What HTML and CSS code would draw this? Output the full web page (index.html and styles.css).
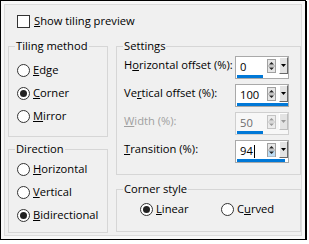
FILE: index.html
```html
<!DOCTYPE html>
<html lang="en">
<head>
    <meta charset="UTF-8">
    <title>Tiling</title>
    <link rel="stylesheet" href="styles.css">
</head>
<body>
    <div class="dialog">
        <div class="panel">
            <div class="check-row">
                <span class="checkbox"></span>
                <span><u>S</u>how tiling preview</span>
            </div>

            <div class="columns">
                <div class="col-left">
                    <fieldset class="group tiling">
                        <legend>Tiling method</legend>
                        <div class="radio-list">
                            <div class="radio-item"><span class="radio"></span><span><u>E</u>dge</span></div>
                            <div class="radio-item"><span class="radio checked"></span><span><u>C</u>orner</span></div>
                            <div class="radio-item"><span class="radio"></span><span><u>M</u>irror</span></div>
                        </div>
                    </fieldset>

                    <fieldset class="group direction">
                        <legend>Direction</legend>
                        <div class="radio-list">
                            <div class="radio-item"><span class="radio"></span><span><u>H</u>orizontal</span></div>
                            <div class="radio-item"><span class="radio"></span><span><u>V</u>ertical</span></div>
                            <div class="radio-item"><span class="radio checked"></span><span><u>B</u>idirectional</span></div>
                        </div>
                    </fieldset>
                </div>

                <div class="col-right">
                    <fieldset class="group settings">
                        <legend>Settings</legend>

                        <div class="field-row">
                            <span class="field-label">H<u>o</u>rizontal offset (%):</span>
                            <div class="spin">
                                <div class="spin-main">
                                    <span class="spin-value">0</span>
                                    <span class="spin-arrows">
                                        <svg width="9" height="14" viewBox="0 0 9 14"><rect x="0.5" y="0.5" width="8" height="13" fill="#e6e6e6" stroke="#a0a0a0"/><line x1="1" y1="7" x2="8" y2="7" stroke="#a0a0a0"/><path d="M2 5.5 L4.5 3 L7 5.5 Z" fill="#222"/><path d="M2 8.5 L7 8.5 L4.5 11 Z" fill="#222"/></svg>
                                    </span>
                                    <span class="spin-drop"><svg width="5" height="3" viewBox="0 0 5 3"><path d="M0 0 L5 0 L2.5 3 Z" fill="#000"/></svg></span>
                                </div>
                                <div class="spin-track"><div class="spin-bar" style="width: 50%"></div></div>
                            </div>
                        </div>

                        <div class="field-row">
                            <span class="field-label">Ve<u>r</u>tical offset (%):</span>
                            <div class="spin">
                                <div class="spin-main">
                                    <span class="spin-value">100</span>
                                    <span class="spin-arrows">
                                        <svg width="9" height="14" viewBox="0 0 9 14"><rect x="0.5" y="0.5" width="8" height="13" fill="#e6e6e6" stroke="#a0a0a0"/><line x1="1" y1="7" x2="8" y2="7" stroke="#a0a0a0"/><path d="M2 5.5 L4.5 3 L7 5.5 Z" fill="#222"/><path d="M2 8.5 L7 8.5 L4.5 11 Z" fill="#222"/></svg>
                                    </span>
                                    <span class="spin-drop"><svg width="5" height="3" viewBox="0 0 5 3"><path d="M0 0 L5 0 L2.5 3 Z" fill="#000"/></svg></span>
                                </div>
                                <div class="spin-track"><div class="spin-bar" style="width: 100%"></div></div>
                            </div>
                        </div>

                        <div class="field-row disabled">
                            <span class="field-label"><u>W</u>idth (%):</span>
                            <div class="spin">
                                <div class="spin-main">
                                    <span class="spin-value">50</span>
                                    <span class="spin-arrows">
                                        <svg width="9" height="14" viewBox="0 0 9 14"><rect x="0.5" y="0.5" width="8" height="13" fill="#ececec" stroke="#c4c4c4"/><line x1="1" y1="7" x2="8" y2="7" stroke="#c4c4c4"/><path d="M2 5.5 L4.5 3 L7 5.5 Z" fill="#999"/><path d="M2 8.5 L7 8.5 L4.5 11 Z" fill="#999"/></svg>
                                    </span>
                                    <span class="spin-drop"><svg width="5" height="3" viewBox="0 0 5 3"><path d="M0 0 L5 0 L2.5 3 Z" fill="#999"/></svg></span>
                                </div>
                                <div class="spin-track"><div class="spin-bar" style="width: 50%"></div></div>
                            </div>
                        </div>

                        <div class="field-row">
                            <span class="field-label"><u>T</u>ransition (%):</span>
                            <div class="spin focused">
                                <div class="spin-main">
                                    <span class="spin-value">94<span class="caret"></span></span>
                                    <span class="spin-arrows">
                                        <svg width="9" height="14" viewBox="0 0 9 14"><rect x="0.5" y="0.5" width="8" height="13" fill="#e6e6e6" stroke="#a0a0a0"/><rect x="1" y="7.5" width="7" height="6" fill="#bcdcf4"/><line x1="1" y1="7" x2="8" y2="7" stroke="#a0a0a0"/><path d="M2 5.5 L4.5 3 L7 5.5 Z" fill="#222"/><path d="M2 8.5 L7 8.5 L4.5 11 Z" fill="#222"/></svg>
                                    </span>
                                    <span class="spin-drop"><svg width="5" height="3" viewBox="0 0 5 3"><path d="M0 0 L5 0 L2.5 3 Z" fill="#000"/></svg></span>
                                </div>
                                <div class="spin-track"><div class="spin-bar" style="width: 94%"></div></div>
                            </div>
                        </div>
                    </fieldset>

                    <fieldset class="group corner">
                        <legend>Corner style</legend>
                        <div class="radio-inline">
                            <div class="radio-item linear"><span class="radio checked"></span><span><u>L</u>inear</span></div>
                            <div class="radio-item"><span class="radio"></span><span>C<u>u</u>rved</span></div>
                        </div>
                    </fieldset>
                </div>
            </div>
        </div>
    </div>
</body>
</html>
```

FILE: styles.css
```css
* {
    margin: 0;
    padding: 0;
    box-sizing: border-box;
}

body {
    font-family: 'Open Sans', 'Noto Sans', sans-serif;
    font-size: 11.2px;
    line-height: 16px;
    color: #000;
    background-color: #fff;
}

u {
    text-decoration: underline;
    text-underline-offset: 1px;
}

.dialog {
    width: 306px;
    height: 240px;
    border: 1px solid #000;
    box-shadow: 1px 1px 0 #000;
    background-color: #f8f8f8;
    padding: 3px;
}

.panel {
    height: 100%;
    border: 1px solid #dcdcdc;
    background-color: #f0f0f0;
}

.check-row {
    display: flex;
    align-items: center;
    gap: 4px;
    height: 16px;
    margin-top: 8px;
    padding-left: 12px;
}

.checkbox {
    width: 13px;
    height: 13px;
    border: 1px solid #333;
    background-color: #fff;
}

.columns {
    display: flex;
    gap: 8px;
    margin-top: 9px;
    padding-left: 3px;
}

.col-left {
    width: 100px;
    display: flex;
    flex-direction: column;
    gap: 4px;
}

.col-right {
    width: 185px;
    display: flex;
    flex-direction: column;
    gap: 6px;
}

.group {
    border: 1px solid #d6d6d6;
    padding: 0 0 0 6px;
    margin: 0;
    min-width: 0;
}

.group legend {
    padding: 0 1px;
}

.tiling {
    height: 99px;
}

.direction {
    height: 92px;
}

.settings {
    height: 137px;
}

.corner {
    height: 51px;
}

.radio-list {
    display: flex;
    flex-direction: column;
    gap: 7px;
    padding-left: 2px;
}

.tiling .radio-list {
    margin-top: 8px;
}

.direction .radio-list {
    margin-top: 4px;
}

.radio-item {
    display: flex;
    align-items: center;
    gap: 3px;
    height: 16px;
    white-space: nowrap;
}

.radio {
    width: 13px;
    height: 13px;
    border: 1px solid #333;
    border-radius: 50%;
    background-color: #fff;
    display: flex;
    align-items: center;
    justify-content: center;
}

.radio.checked::after {
    content: '';
    width: 7px;
    height: 7px;
    border-radius: 50%;
    background-color: #222;
}

.radio-inline {
    display: flex;
    margin-top: 4px;
    padding-left: 17px;
}

.radio-item.linear {
    width: 81px;
}

.field-row {
    display: flex;
    justify-content: space-between;
    align-items: flex-start;
    height: 23px;
    margin-top: 5px;
    padding-left: 1px;
    padding-right: 11px;
}

.settings legend + .field-row {
    margin-top: 2px;
}

.field-label {
    padding-top: 1px;
    white-space: nowrap;
}

.disabled .field-label {
    color: #a0a0a0;
}

.spin {
    flex-shrink: 0;
    width: 54px;
    height: 23px;
    border: 1px solid #a9a9a9;
    background-color: #fff;
    display: flex;
    flex-direction: column;
}

.disabled .spin {
    border-color: #cfcfcf;
    background-color: #f7f7f7;
}

.spin-main {
    flex: 1;
    display: flex;
    align-items: flex-start;
}

.spin-value {
    flex: 1;
    padding-left: 4px;
    padding-top: 2px;
    display: flex;
    align-items: center;
}

.disabled .spin-value {
    color: #6d6d6d;
}

.caret {
    width: 1px;
    height: 13px;
    background-color: #000;
    margin-left: 1px;
}

.spin-arrows {
    width: 9px;
    height: 14px;
    margin-top: 2px;
    margin-right: 3px;
    display: flex;
}

.spin-drop {
    width: 9px;
    height: 17px;
    background-color: #e3e3e3;
    border-top: 1px solid #fff;
    border-left: 1px solid #fff;
    border-right: 1px solid #696969;
    border-bottom: 1px solid #696969;
    display: flex;
    align-items: center;
    justify-content: center;
}

.disabled .spin-drop {
    border-right-color: #bdbdbd;
    border-bottom-color: #bdbdbd;
}

.spin-track {
    height: 3px;
    padding-left: 1px;
}

.spin-bar {
    height: 100%;
    background-color: #0078d7;
}
```
